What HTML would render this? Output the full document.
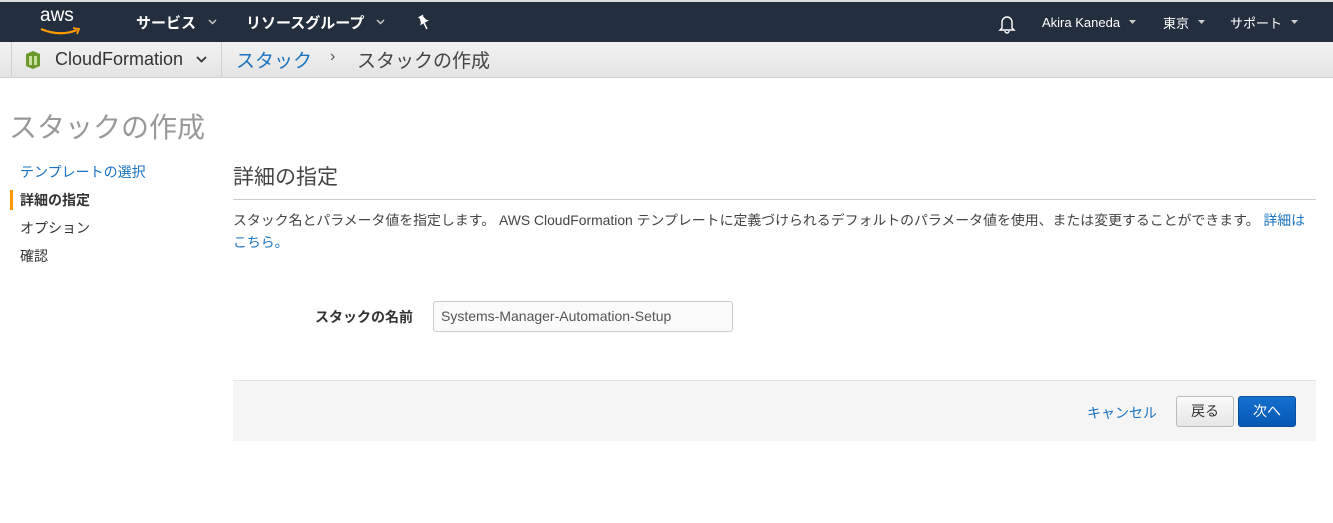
<!DOCTYPE html>
<html><head><meta charset="utf-8">
<style>
*{box-sizing:border-box;margin:0;padding:0}
body{width:1333px;height:523px;overflow:hidden;background:#fff;font-family:"Liberation Sans","Noto Sans CJK JP",sans-serif;color:#444;position:relative}
.top{position:absolute;left:0;top:0;width:1333px;height:42px;background:#232f3e;border-top:2px solid #dcdcdc;color:#fff;font-size:14px}
.ti{position:absolute;top:0;height:40px;display:flex;align-items:center;white-space:nowrap}
.sub{position:absolute;left:0;top:42px;width:1333px;height:36px;background:linear-gradient(#f2f2f2,#e4e4e4);border-bottom:1px solid #d0d0d0}
.a{position:absolute;white-space:nowrap}
.link{color:#1a73c0}
</style></head><body>
<div class="top">
  <span class="ti" style="left:40px;top:-6px;font-size:19px">aws</span>
  <svg style="position:absolute;left:39px;top:25px" width="42" height="10" viewBox="0 0 42 10"><path d="M2 2 Q21 10 38 3" stroke="#f90" stroke-width="2.2" fill="none"/><path d="M34 1 L40 2 L38 7" stroke="#f90" stroke-width="1.8" fill="none"/></svg>
  <span class="ti" style="left:136px;font-weight:bold;font-size:15px">サービス<svg style="margin-left:12px" width="9" height="6" viewBox="0 0 9 6"><path d="M1 1 L4.5 4.5 L8 1" stroke="#ccc" stroke-width="1.5" fill="none"/></svg></span>
  <span class="ti" style="left:246px;font-weight:bold;font-size:15px">リソースグループ<svg style="margin-left:12px" width="9" height="6" viewBox="0 0 9 6"><path d="M1 1 L4.5 4.5 L8 1" stroke="#ccc" stroke-width="1.5" fill="none"/></svg></span>
  <svg style="position:absolute;left:417px;top:12px" width="14" height="16" viewBox="0 0 14 16"><path d="M4 1 L10 1 L9 3 L10 7 L12 9 L2 9 L4 7 L5 3 Z" fill="#fff" transform="rotate(-30 7 8)"/><path d="M7 9 L10 15" stroke="#fff" stroke-width="1.5"/></svg>
  <svg style="position:absolute;left:998px;top:12px" width="18" height="20" viewBox="0 0 18 20"><path d="M4 14 V8 A5 5 0 0 1 14 8 V14 L16 16 H2 Z M7 17 A2 2 0 0 0 11 17" stroke="#fff" stroke-width="1.4" fill="none"/></svg>
  <span class="ti" style="left:1042px;font-size:13px">Akira Kaneda<svg style="margin-left:9px" width="7" height="4" viewBox="0 0 7 4"><path d="M0 0 H7 L3.5 4Z" fill="#ccc"/></svg></span>
  <span class="ti" style="left:1163px;font-size:13px">東京<svg style="margin-left:9px" width="7" height="4" viewBox="0 0 7 4"><path d="M0 0 H7 L3.5 4Z" fill="#ccc"/></svg></span>
  <span class="ti" style="left:1230px;font-size:13px">サポート<svg style="margin-left:9px" width="7" height="4" viewBox="0 0 7 4"><path d="M0 0 H7 L3.5 4Z" fill="#ccc"/></svg></span>
</div>
<div class="sub">
  <div class="a" style="left:11px;top:0;width:1px;height:35px;background:#d0d0d0"></div>
  <svg style="position:absolute;left:25px;top:9px" width="16" height="18" viewBox="0 0 16 18"><path d="M1 3 L8 0 L15 3 V15 L8 18 L1 15 Z" fill="#6a9a2d"/><rect x="4" y="5" width="3" height="9" fill="#c8e09a"/><rect x="9" y="5" width="3" height="9" fill="#c8e09a"/></svg>
  <div class="a" style="left:55px;top:7px;font-size:18px;color:#333">CloudFormation</div>
  <svg style="position:absolute;left:196px;top:14px" width="11" height="7" viewBox="0 0 11 7"><path d="M1 1 L5.5 5.5 L10 1" stroke="#333" stroke-width="1.8" fill="none"/></svg>
  <div class="a" style="left:221px;top:0;width:1px;height:35px;background:#d0d0d0"></div>
  <div class="a link" style="left:236px;top:4px;font-size:19px">スタック</div>
  <div class="a" style="left:330px;top:6px;font-size:16px;color:#555">›</div>
  <div class="a" style="left:357px;top:4px;font-size:19px;color:#444">スタックの作成</div>
</div>
<div class="a" style="left:9px;top:106px;font-size:28px;color:#999">スタックの作成</div>
<div class="a link" style="left:20px;top:162px;font-size:14px">テンプレートの選択</div>
<div class="a" style="left:10px;top:190px;width:3px;height:20px;background:#f90"></div>
<div class="a" style="left:20px;top:190px;font-size:14px;font-weight:bold;color:#333">詳細の指定</div>
<div class="a" style="left:20px;top:218px;font-size:14px;color:#333">オプション</div>
<div class="a" style="left:20px;top:246px;font-size:14px;color:#333">確認</div>
<div class="a" style="left:233px;top:161px;font-size:21px;color:#444">詳細の指定</div>
<div class="a" style="left:233px;top:199px;width:1083px;height:1px;background:#ccc"></div>
<div class="a" style="left:233px;top:209px;width:1075px;font-size:13.9px;line-height:22px;color:#444;white-space:normal">スタック名とパラメータ値を指定します。 AWS CloudFormation テンプレートに定義づけられるデフォルトのパラメータ値を使用、または変更することができます。 <span class="link">詳細はこちら。</span></div>
<div class="a" style="left:315px;top:307px;font-size:14px;font-weight:bold;color:#333">スタックの名前</div>
<div class="a" style="left:433px;top:301px;width:300px;height:31px;border:1px solid #ccc;border-radius:3px;background:#fafafa;font-size:14px;color:#555;padding:6px 7px">Systems-Manager-Automation-Setup</div>
<div class="a" style="left:233px;top:380px;width:1083px;height:61px;background:#f5f5f5;border-top:1px solid #e4e4e4"></div>
<div class="a link" style="left:1087px;top:403px;font-size:14px">キャンセル</div>
<div class="a" style="left:1176px;top:396px;width:58px;height:31px;border:1px solid #bbb;border-radius:3px;background:linear-gradient(#fafafa,#e6e6e6);font-size:14px;color:#333;text-align:center;line-height:29px">戻る</div>
<div class="a" style="left:1238px;top:396px;width:58px;height:31px;border:1px solid #0a4f9e;border-radius:3px;background:linear-gradient(#1570cf,#0657b4);font-size:14px;color:#fff;text-align:center;line-height:29px">次へ</div>
</body></html>
